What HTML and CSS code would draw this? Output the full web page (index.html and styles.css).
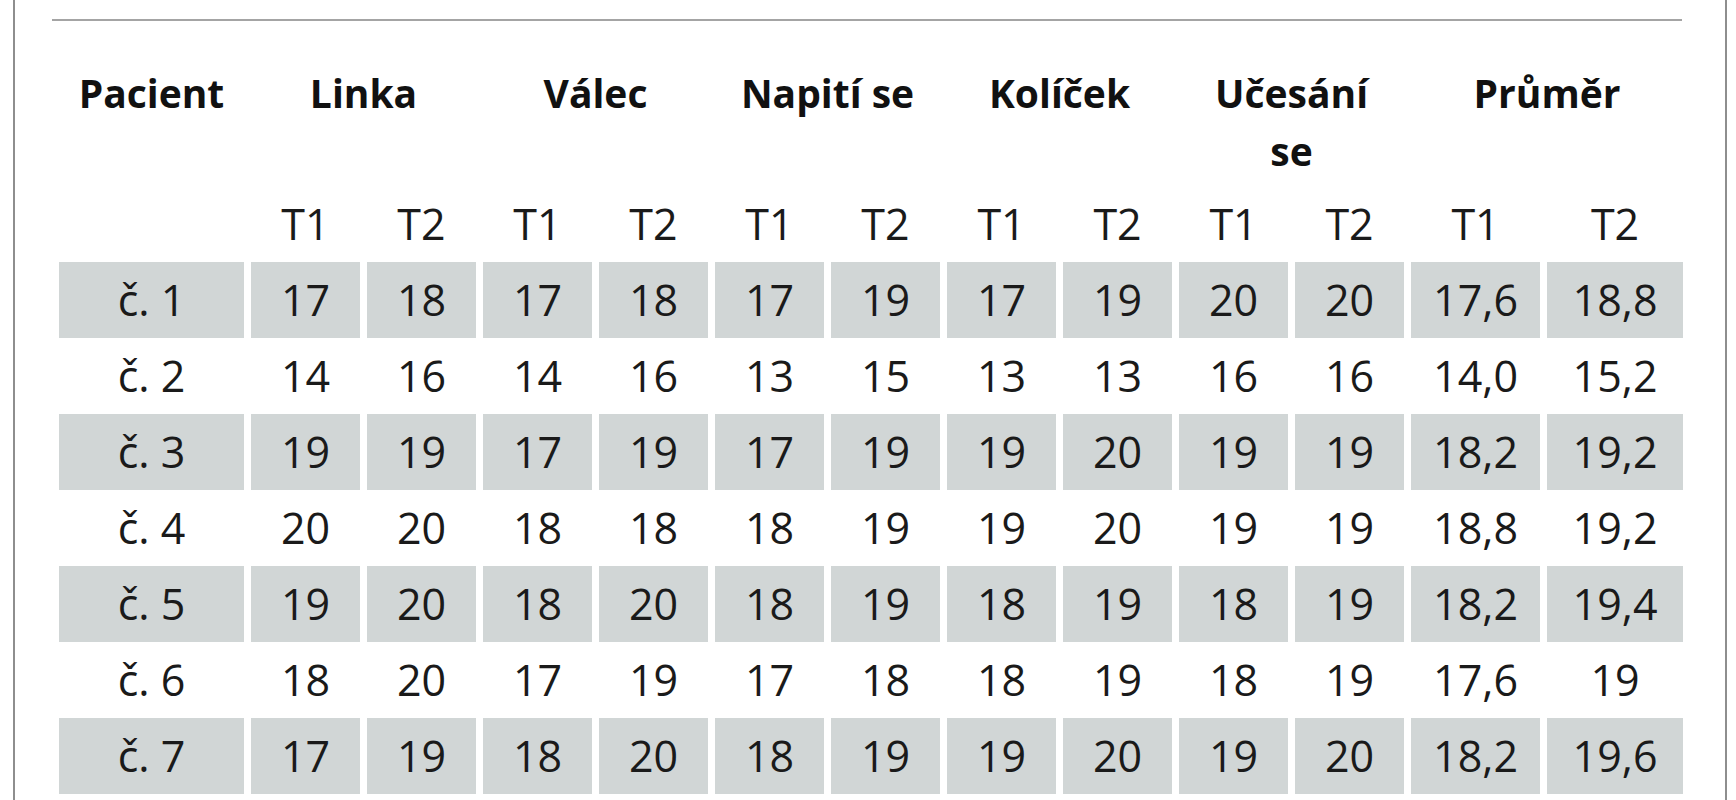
FILE: index.html
```html
<!DOCTYPE html>
<html lang="cs">
<head>
<meta charset="utf-8">
<title>Tabulka</title>
<link rel="stylesheet" href="styles.css">
</head>
<body>
<div class="page">
  <div class="rule"></div>
  <table class="scores">
    <colgroup>
      <col class="c-pac">
      <col class="c-n"><col class="c-n">
      <col class="c-n"><col class="c-n">
      <col class="c-n"><col class="c-n">
      <col class="c-n"><col class="c-n">
      <col class="c-n"><col class="c-n">
      <col class="c-a1"><col class="c-a2">
    </colgroup>
    <thead>
      <tr class="head">
        <th>Pacient</th>
        <th colspan="2">Linka</th>
        <th colspan="2">Válec</th>
        <th colspan="2">Napití se</th>
        <th colspan="2">Kolíček</th>
        <th colspan="2">Učesání<br>se</th>
        <th colspan="2">Průměr</th>
      </tr>
      <tr class="sub">
        <td></td>
        <td>T1</td><td>T2</td>
        <td>T1</td><td>T2</td>
        <td>T1</td><td>T2</td>
        <td>T1</td><td>T2</td>
        <td>T1</td><td>T2</td>
        <td>T1</td><td>T2</td>
      </tr>
    </thead>
    <tbody>
      <tr class="alt"><td>č. 1</td><td>17</td><td>18</td><td>17</td><td>18</td><td>17</td><td>19</td><td>17</td><td>19</td><td>20</td><td>20</td><td>17,6</td><td>18,8</td></tr>
      <tr><td>č. 2</td><td>14</td><td>16</td><td>14</td><td>16</td><td>13</td><td>15</td><td>13</td><td>13</td><td>16</td><td>16</td><td>14,0</td><td>15,2</td></tr>
      <tr class="alt"><td>č. 3</td><td>19</td><td>19</td><td>17</td><td>19</td><td>17</td><td>19</td><td>19</td><td>20</td><td>19</td><td>19</td><td>18,2</td><td>19,2</td></tr>
      <tr><td>č. 4</td><td>20</td><td>20</td><td>18</td><td>18</td><td>18</td><td>19</td><td>19</td><td>20</td><td>19</td><td>19</td><td>18,8</td><td>19,2</td></tr>
      <tr class="alt"><td>č. 5</td><td>19</td><td>20</td><td>18</td><td>20</td><td>18</td><td>19</td><td>18</td><td>19</td><td>18</td><td>19</td><td>18,2</td><td>19,4</td></tr>
      <tr><td>č. 6</td><td>18</td><td>20</td><td>17</td><td>19</td><td>17</td><td>18</td><td>18</td><td>19</td><td>18</td><td>19</td><td>17,6</td><td>19</td></tr>
      <tr class="alt"><td>č. 7</td><td>17</td><td>19</td><td>18</td><td>20</td><td>18</td><td>19</td><td>19</td><td>20</td><td>19</td><td>20</td><td>18,2</td><td>19,6</td></tr>
    </tbody>
  </table>
</div>
</body>
</html>
```

FILE: styles.css
```css
html, body {
  margin: 0;
  padding: 0;
  background: #ffffff;
}

body {
  font-family: "Open Sans", "Noto Sans", "DejaVu Sans", sans-serif;
  color: #1a1a1a;
  overflow: hidden;
}

.page {
  margin: 0 9px 0 13px;
  height: 800px;
  border-left: 2px solid #8e8e8e;
  border-right: 2px solid #8e8e8e;
  overflow: hidden;
}

.rule {
  margin: 19px 0 0 37px;
  width: 1630px;
  height: 2px;
  background: #a4a4a4;
}

.scores {
  margin-left: 37px;
  table-layout: fixed;
  width: 1638px;
  border-collapse: separate;
  border-spacing: 7px 0;
  font-size: 43px;
}

.c-pac { width: 185px; }
.c-n { width: 109px; }
.c-a1 { width: 129px; }
.c-a2 { width: 136px; }

.scores th,
.scores td {
  padding: 0;
  text-align: center;
  white-space: nowrap;
}

.head th {
  height: 165px;
  vertical-align: top;
  padding-top: 43px;
  box-sizing: border-box;
  font-size: 39px;
  font-weight: 700;
  line-height: 58px;
  color: #111111;
}

.sub td,
tbody td {
  height: 76px;
  line-height: 76px;
  vertical-align: middle;
}

tbody tr.alt td {
  background: #d1d6d6;
}
```
